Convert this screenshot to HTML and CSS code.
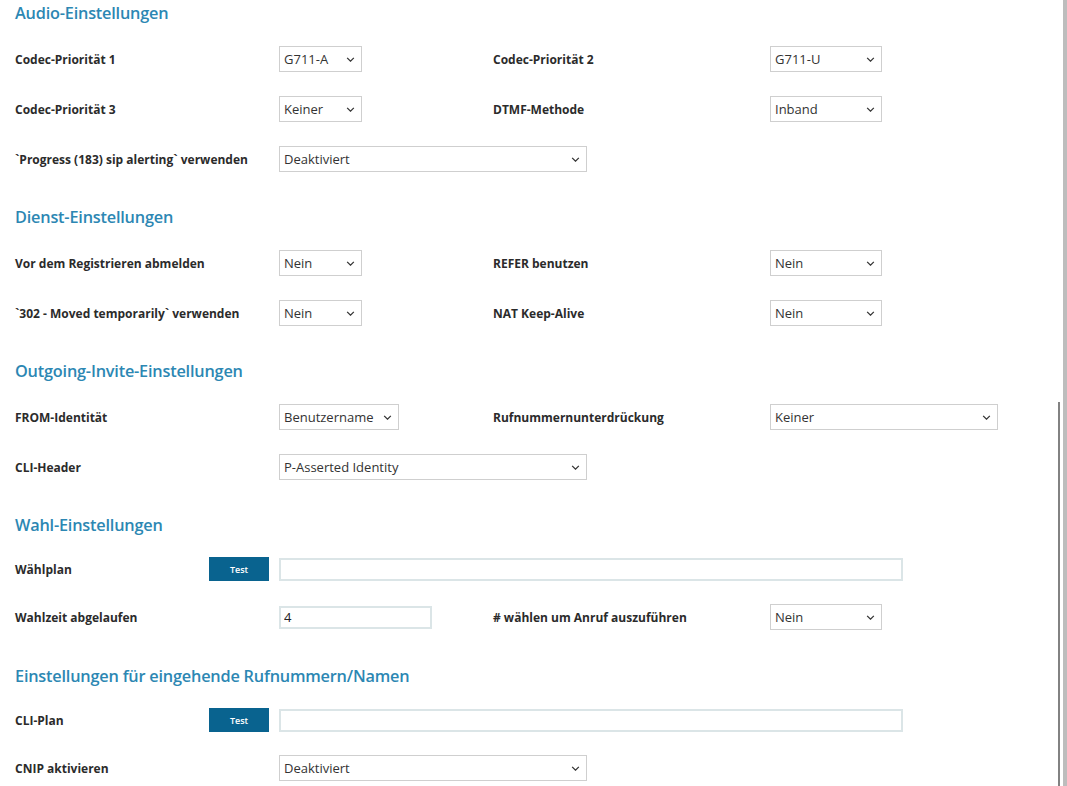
FILE: index.html
```html
<!DOCTYPE html>
<html lang="de">
<head>
<meta charset="utf-8">
<title>SIP-Konto – Erweiterte Einstellungen</title>
<link rel="stylesheet" href="styles.css">
</head>
<body>
<div class="page">
  <main class="content">
    <section class="section">
      <h2 class="section-title">Audio-Einstellungen</h2>
      <div class="row">
        <label class="label">Codec-Priorität 1</label>
        <div class="control"><span class="select w-82"><select><option>G711-A</option></select><svg class="chev" viewBox="0 0 10 6"><path d="M1 1l4 4 4-4"/></svg></span></div>
        <label class="label">Codec-Priorität 2</label>
        <div class="control"><span class="select w-111"><select><option>G711-U</option></select><svg class="chev" viewBox="0 0 10 6"><path d="M1 1l4 4 4-4"/></svg></span></div>
      </div>
      <div class="row">
        <label class="label">Codec-Priorität 3</label>
        <div class="control"><span class="select w-82"><select><option>Keiner</option></select><svg class="chev" viewBox="0 0 10 6"><path d="M1 1l4 4 4-4"/></svg></span></div>
        <label class="label">DTMF-Methode</label>
        <div class="control"><span class="select w-111"><select><option>Inband</option></select><svg class="chev" viewBox="0 0 10 6"><path d="M1 1l4 4 4-4"/></svg></span></div>
      </div>
      <div class="row">
        <label class="label">`Progress (183) sip alerting` verwenden</label>
        <div class="control wide"><span class="select w-307"><select><option>Deaktiviert</option></select><svg class="chev" viewBox="0 0 10 6"><path d="M1 1l4 4 4-4"/></svg></span></div>
      </div>
    </section>

    <section class="section">
      <h2 class="section-title">Dienst-Einstellungen</h2>
      <div class="row">
        <label class="label">Vor dem Registrieren abmelden</label>
        <div class="control"><span class="select w-82"><select><option>Nein</option></select><svg class="chev" viewBox="0 0 10 6"><path d="M1 1l4 4 4-4"/></svg></span></div>
        <label class="label">REFER benutzen</label>
        <div class="control"><span class="select w-111"><select><option>Nein</option></select><svg class="chev" viewBox="0 0 10 6"><path d="M1 1l4 4 4-4"/></svg></span></div>
      </div>
      <div class="row">
        <label class="label">`302 - Moved temporarily` verwenden</label>
        <div class="control"><span class="select w-82"><select><option>Nein</option></select><svg class="chev" viewBox="0 0 10 6"><path d="M1 1l4 4 4-4"/></svg></span></div>
        <label class="label">NAT Keep-Alive</label>
        <div class="control"><span class="select w-111"><select><option>Nein</option></select><svg class="chev" viewBox="0 0 10 6"><path d="M1 1l4 4 4-4"/></svg></span></div>
      </div>
    </section>

    <section class="section">
      <h2 class="section-title">Outgoing-Invite-Einstellungen</h2>
      <div class="row">
        <label class="label">FROM-Identität</label>
        <div class="control"><span class="select w-119"><select><option>Benutzername</option></select><svg class="chev" viewBox="0 0 10 6"><path d="M1 1l4 4 4-4"/></svg></span></div>
        <label class="label">Rufnummernunterdrückung</label>
        <div class="control"><span class="select w-227"><select><option>Keiner</option></select><svg class="chev" viewBox="0 0 10 6"><path d="M1 1l4 4 4-4"/></svg></span></div>
      </div>
      <div class="row">
        <label class="label">CLI-Header</label>
        <div class="control wide"><span class="select w-307"><select><option>P-Asserted Identity</option></select><svg class="chev" viewBox="0 0 10 6"><path d="M1 1l4 4 4-4"/></svg></span></div>
      </div>
    </section>

    <section class="section compact">
      <h2 class="section-title">Wahl-Einstellungen</h2>
      <div class="row">
        <div class="label with-button"><label>Wählplan</label><button class="btn" type="button">Test</button></div>
        <div class="control wide"><input class="text w-623" type="text" value=""></div>
      </div>
      <div class="row">
        <label class="label">Wahlzeit abgelaufen</label>
        <div class="control"><input class="text w-152" type="text" value="4"></div>
        <label class="label"># wählen um Anruf auszuführen</label>
        <div class="control"><span class="select w-111"><select><option>Nein</option></select><svg class="chev" viewBox="0 0 10 6"><path d="M1 1l4 4 4-4"/></svg></span></div>
      </div>
    </section>

    <section class="section compact">
      <h2 class="section-title">Einstellungen für eingehende Rufnummern/Namen</h2>
      <div class="row">
        <div class="label with-button"><label>CLI-Plan</label><button class="btn" type="button">Test</button></div>
        <div class="control wide"><input class="text w-623" type="text" value=""></div>
      </div>
      <div class="row">
        <label class="label">CNIP aktivieren</label>
        <div class="control wide"><span class="select w-307"><select><option>Deaktiviert</option></select><svg class="chev" viewBox="0 0 10 6"><path d="M1 1l4 4 4-4"/></svg></span></div>
      </div>
    </section>

    <div class="scroll-thumb"></div>
  </main>
  <div class="scroll-track"></div>
</div>
</body>
</html>
```

FILE: styles.css
```css
html, body {
  margin: 0;
  padding: 0;
  height: 100%;
  background: #ffffff;
  overflow: hidden;
}

body {
  font-family: "Open Sans", "Noto Sans", "Liberation Sans", sans-serif;
  color: #333333;
}

.page {
  display: flex;
  height: 786px;
}

.content {
  position: relative;
  flex: 1;
  padding-left: 15px;
}

.scroll-track {
  width: 4px;
  background: #bdbdbd;
}

.scroll-thumb {
  position: absolute;
  right: 3px;
  top: 402px;
  bottom: 0;
  width: 2px;
  background: #828282;
}

/* sections */
.section {
  margin-bottom: 20px;
}

.section-title {
  margin: 0 0 8px;
  height: 26px;
  line-height: 26px;
  font-size: 16.3px;
  font-weight: 600;
  color: #2c87b3;
  letter-spacing: -0.2px;
}

.row {
  display: grid;
  grid-template-columns: 264px 214px 277px auto;
  align-items: center;
  height: 50px;
}

.compact .section-title {
  margin-bottom: 7px;
}

.compact .row {
  height: 48px;
}

.compact {
  margin-bottom: 22px;
}

.label {
  font-size: 12px;
  font-weight: 700;
  color: #2b2b2b;
  white-space: nowrap;
}

.with-button {
  display: flex;
  align-items: center;
  justify-content: space-between;
  padding-right: 10px;
}

.control {
  display: flex;
  align-items: center;
}

.control.wide {
  grid-column: 2 / 5;
}

/* select boxes */
.select {
  position: relative;
  display: inline-block;
  height: 26px;
}

.select select {
  appearance: none;
  -webkit-appearance: none;
  box-sizing: border-box;
  width: 100%;
  height: 26px;
  margin: 0;
  padding: 0 20px 0 4px;
  border: 1px solid #cfcfcf;
  border-radius: 0;
  background: #ffffff;
  font-family: inherit;
  font-size: 13px;
  color: #333333;
  outline: none;
}

.chev {
  position: absolute;
  right: 7px;
  top: 11px;
  width: 9px;
  height: 5px;
  pointer-events: none;
  fill: none;
  stroke: #333333;
  stroke-width: 1.5;
}

.w-82 { width: 83px; }
.w-111 { width: 112px; }
.w-119 { width: 120px; }
.w-227 { width: 228px; }
.w-307 { width: 308px; }

/* text inputs */
.text {
  box-sizing: border-box;
  height: 23px;
  margin: 0;
  padding: 0 3px;
  border: 2px solid #dbe5e7;
  border-radius: 0;
  background: #ffffff;
  font-family: inherit;
  font-size: 13px;
  color: #222222;
  outline: none;
}

.w-623 { width: 624px; }
.w-152 { width: 153px; }

/* action button */
.btn {
  width: 60px;
  height: 24px;
  margin: 0;
  padding: 0;
  border: none;
  border-radius: 0;
  background: #09638f;
  color: #ffffff;
  font-family: inherit;
  font-size: 9px;
  font-weight: 600;
}
```
